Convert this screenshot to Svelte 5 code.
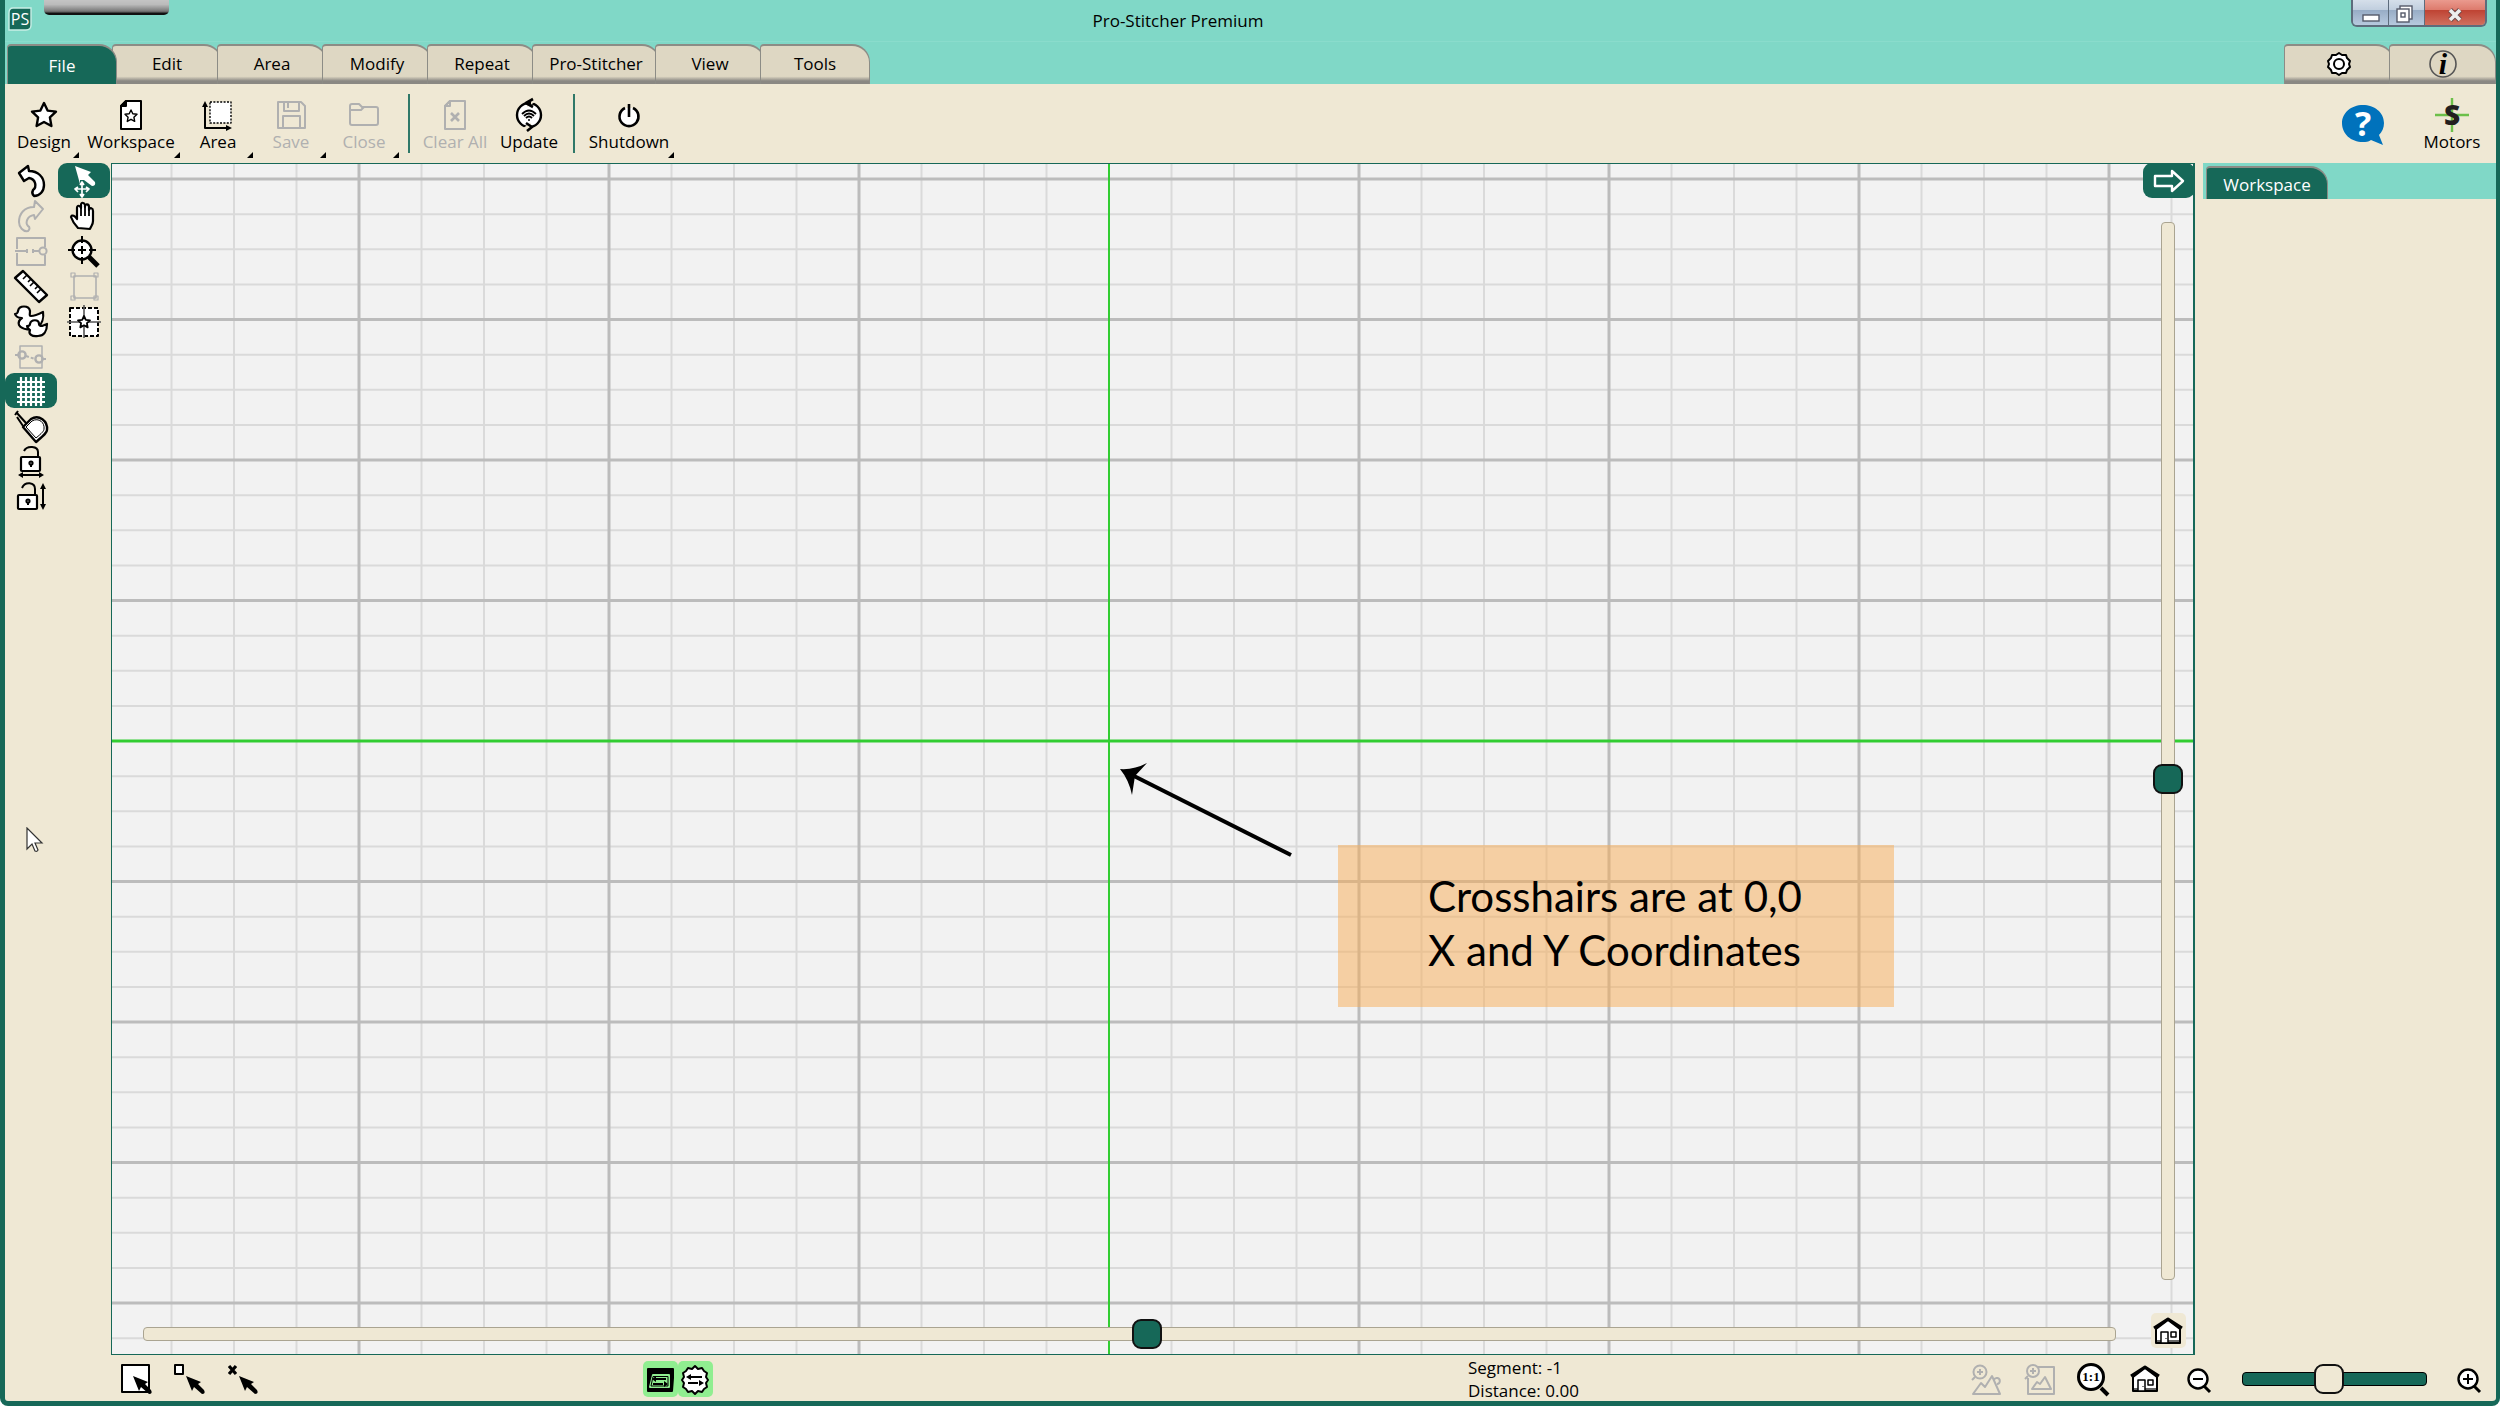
<script>

	let activeTab = "File"
	let tool = "select"
	let grid = true
	let panX = 50.9
	let panY = 52.7
	let zoom = 46.5

	const tabs = ["File", "Edit", "Area", "Modify", "Repeat", "Pro-Stitcher", "View", "Tools"]

	const star = "M17 5 L20.6 12.6 L29 13.6 L22.9 19.4 L24.4 28 L17 24 L9.6 28 L11.1 19.4 L5 13.6 L13.4 12.6 Z"
	const smallStar = "M17 12 L18.8 15.8 L23 16.3 L19.9 19.2 L20.7 23.4 L17 21.3 L13.3 23.4 L14.1 19.2 L11 16.3 L15.2 15.8 Z"
	const house = `<path d="M5 15V29H29V15L17 6Z" fill="#fff"/><path d="M3 14 17 5 31 14" fill="none" stroke-width="3"/><path d="M6 27h22" stroke="#666"/><rect x="10" y="18" width="7" height="11" stroke-width="1.5"/><path d="M15 24v1" stroke-width="1"/><rect x="20" y="18" width="5" height="5" stroke-width="1.5"/>`
	const pointer = `<path d="M14 14 29 20 26 22 32 28 Q34 32 30 32 L22 25 20 29Z" fill="#000" stroke="none"/>`

	// all icons are drawn on a 34 x 34 board
	const icons = {
		design: `<path d="${star}" stroke-width="2.4"/>`,
		workspace: `<path d="M12 3H27V31H7V8Z"/><path d="M7 8 12 3V8Z" fill="#000"/><path d="${smallStar}" stroke-width="1.4"/>`,
		area: `<rect x="9" y="4" width="21" height="21" stroke-width="1.4" stroke-dasharray="2 1.4"/><path d="M4 8V30H27" fill="none"/><path d="M4 3 7 9H1ZM31 30 25 27V33Z" fill="#000" stroke="none"/>`,
		save: `<path d="M4 4H27L31 8V30H4Z"/><path d="M10 4V13H25V4M14 5v5M9 30V18H26V30"/>`,
		close: `<path d="M3 8Q3 6 5 6H12L15 9H29Q31 9 31 11V25Q31 27 29 27H5Q3 27 3 25ZM3 12H14L17 9"/>`,
		clear: `<path d="M12 3H27V31H7V8Z"/><path d="M7 8 12 3V8Z"/><path d="M13 15 21 23M21 15 13 23" stroke-width="2.6"/>`,
		update: `<circle cx="17" cy="17" r="12" stroke-width="2.4"/><path d="M15 0 23 4 15 9Z" fill="#efe8d4" stroke="none"/><path d="M19 25 11 30 19 34Z" fill="#efe8d4" stroke="none"/><path d="M21 1 14 5 21 9M14 5H19M14 25 20 29 15 33" fill="none" stroke-width="2.6"/><path d="M10 16Q17 9 24 16M12 18Q17 13 22 18M14 20Q17 17 20 20" fill="none" stroke-width="1.8"/><circle cx="17" cy="22" r="1" fill="#000" stroke="none"/>`,
		shutdown: `<path d="M13 10A9.5 9.5 0 1 0 21 10" stroke-width="2.6"/><path d="M17 6V19" stroke-width="2.6"/>`,
		undo: `<path d="M5 9 14 2 15 7C24 7 30 13 30 21C30 27 26 32 20 32C18 30 18 28 19 26C23 23 22 15 15 14L10 17Z" stroke-width="2.4"/>`,
		redo: `<path d="M29 10 21 2 20 8C10 8 5 15 5 23C5 28 9 33 14 32C16 30 16 28 14 27C11 24 13 17 20 16L21 20Z"/>`,
		split: `<path d="M3 15V4H31V13M31 21V31H3V19M1 17H13M19 17H25"/><path d="M13 15v4M19 15v4"/><circle cx="29" cy="17" r="3.6"/>`,
		ruler: `<path d="M9 2 33 26 25 33 1 9Z" stroke-width="2.4"/><path d="M13 6 9 10M17 10 14 13M20 13 16 17M24 17 21 20M27 20 23 24" stroke-width="1.6"/>`,
		ducks: `<path d="M1 10C3 10 4 8 4 7C5 1 15 1 16 7C16 10 15 12 17 12C21 12 25 10 29 8C30 14 28 20 24 23C18 27 8 26 5 21C4 18 5 16 8 14C5 14 2 13 1 10Z" stroke-width="2.2"/><path d="M13 22C15 22 16 21 16 20C17 15 25 15 25 20C25 22 26 22 28 22L33 20C33 27 30 32 24 32C18 33 14 30 16 26C15 25 13 24 13 22Z" stroke-width="2.2"/>`,
		nodes: `<rect x="6" y="7" width="22" height="22" stroke-width="1.5"/><path d="M1 16H4M12 17 21 20M29 20H32" stroke-dasharray="3 2"/><circle cx="8" cy="16" r="3.6" stroke-width="2.4"/><circle cx="25" cy="20" r="3.6" stroke-width="2.4"/>`,
		grid: `<path d="M7 3V32M12 3V32M17 3V32M22 3V32M27 3V32M3 8H31M3 13H31M3 18H31M3 23H31M3 28H31" stroke="#fff" stroke-width="2.2"/>`,
		tape: `<path d="M9 18 17 10C25 5 34 12 33 21C33 24 29 27 22 33Z" stroke-width="2.4"/><path d="M12 18 18 12C25 8 31 14 30 20C30 22 28 24 22 29Z" stroke-width="1"/><path d="M1 6 4 2M2 3 12 14M3 8 9 17" stroke-width="2" fill="none"/>`,
		lockX: `<path d="M10 7C13 1 24 2 24 8V13" fill="none"/><rect x="7" y="13" width="19" height="14" rx="1" stroke-width="2.2"/><circle cx="17" cy="19" r="1.6"/><path d="M17 20v3M7 31H27"/><path d="M4 31 9 28V34ZM30 31 25 28V34Z" fill="#000" stroke="none"/>`,
		lockY: `<path d="M8 9C11 2 21 3 21 10V16" fill="none"/><rect x="4" y="16" width="19" height="14" rx="1" stroke-width="2.2"/><circle cx="14" cy="22" r="1.6"/><path d="M14 23v3M29 7V28"/><path d="M29 4 26 10H32ZM29 31 26 25H32Z" fill="#000" stroke="none"/>`,
		select: `<path d="M8 2 24 8 21 11 28 18Q29 22 25 22L17 16 13 20Z" fill="#fff" stroke="none"/><path d="M15 16V34M6 25H24" stroke="#166858" stroke-width="4"/><path d="M15 19V32M9 25H21M13 21 15 18 17 21M13 30 15 33 17 30M11 23 8 25 11 28M19 23 22 25 19 28" fill="none" stroke="#fff" stroke-width="1.7"/>`,
		hand: `<path d="M11 29C7 25 5 21 4 18C5 15 8 17 10 20V9C10 6 13 6 14 9V6C14 3 17 3 18 6V8C18 4 22 5 22 8V11C23 8 26 9 26 12V22C26 26 24 27 23 30Z" stroke-width="2.2"/><path d="M14 8V17M18 7V17M22 10V17" stroke-width="1.8"/>`,
		zoom: `<path d="M22 23 31 32" stroke-width="5"/><circle cx="15" cy="16" r="9.5" stroke-width="2.4"/><path d="M15 2V9M15 23V30M1 16H8M22 16H29M15 12V20M11 16H19" stroke-width="2"/>`,
		frame: `<path d="M7 7H29V29H7Z" stroke-width="1.6"/><g stroke-width="1.2"><rect x="4" y="4" width="4" height="4"/><rect x="27" y="4" width="4" height="4"/><rect x="4" y="27" width="4" height="4"/><rect x="27" y="27" width="4" height="4"/></g>`,
		center: `<rect x="3" y="4" width="28" height="28" stroke-dasharray="4 2"/><path d="M17 1V34M0 18H34" stroke="#555" stroke-width="1.6"/><path d="${smallStar}" stroke-width="1.8"/>`,
		boxSelect: `<rect x="3" y="3" width="27" height="27"/>` + pointer,
		nodeSelect: `<rect x="3" y="3" width="8" height="9"/>` + pointer,
		clearSelect: `<path d="M4 4 11 12M11 4 4 12" stroke-width="3.2"/>` + pointer,
		stitchArea: `<path d="M5 7H30V16L29 29H5Z" fill="#000"/><path d="M10 13H26V25H7Z" fill="#90ee90" stroke="#90ee90" stroke-width="2"/><path d="M10 14.500H25V24H8Z" fill="#90ee90" stroke="#000" stroke-width="1"/><path d="M13 17H23M10 22H20" stroke-width="1.8"/><path d="M9 17 13 14V20ZM25 22 21 19V25Z" fill="#000" stroke="none"/>`,
		stitchGear: `<path d="M17 4 20 7 24 6 26 9 29 11 28 15 30 18 28 21 29 25 26 27 24 30 20 29 17 32 14 29 10 30 8 27 5 25 6 21 4 18 6 15 5 11 8 9 10 6 14 7Z"/><path d="M13 15H24M10 21H20" stroke-width="1.8"/><path d="M8 15 13 12V18ZM26 21 21 18V24Z" fill="#000" stroke="none"/>`,
		home: house,
		mountain: `<circle cx="11" cy="10" r="6.5"/><path d="M11 7v6M8 10h6M6 15 3 18M4 32 12 21 16 25 23 14 31 32ZM25 18A3 3 0 1 1 28 22"/>`,
		picture: `<path d="M16 5H32V32H6V16"/><circle cx="11" cy="9" r="6"/><path d="M11 6v6M8 9h6M6 14 3 17M10 27 15 20 18 22 23 15 29 27Z"/>`,
		actual: `<path d="M26 26 33 33" stroke-width="4"/><circle cx="16" cy="15" r="12.5" stroke-width="3"/><text x="16" y="19" text-anchor="middle" font-family="Liberation Serif, serif" font-weight="bold" font-size="13" fill="#000" stroke="none">1:1</text>`,
		minus: `<path d="M23 24 29 30" stroke-width="3"/><circle cx="17" cy="17" r="9.5" stroke-width="2.4"/><path d="M12 17H22"/>`,
		plus: `<path d="M23 24 29 30" stroke-width="3"/><circle cx="17" cy="17" r="9.5" stroke-width="2.4"/><path d="M12 17H22M17 12V22"/>`,
		gear: `<path d="M17 6 20 8 24 8 25 11 28 14 27 17 28 20 25 23 24 26 20 26 17 28 14 26 10 26 9 23 6 20 7 17 6 14 9 11 10 8 14 8Z"/><circle cx="17" cy="17" r="5"/>`,
		info: `<circle cx="17" cy="17" r="13" fill="none" stroke="#555" stroke-width="1.6"/><text x="17" y="27" text-anchor="middle" font-family="Liberation Serif, serif" font-weight="bold" font-style="italic" font-size="30" fill="#000" stroke="none">i</text>`,
		motors: `<path d="M17 0V34M0 17H34" stroke="#6cc04a" stroke-width="2.4"/><text x="17" y="27" text-anchor="middle" font-family="Open Sans, sans-serif" font-weight="800" font-size="28" fill="#231f20" stroke="none">S</text>`
	}

	const fileTools = [
		{ name: "Design", icon: "design", menu: true },
		{ name: "Workspace", icon: "workspace", menu: true, size: "wide" },
		{ name: "Area", icon: "area", menu: true },
		{ name: "Save", icon: "save", menu: true, off: true },
		{ name: "Close", icon: "close", menu: true, off: true },
		{ line: true },
		{ name: "Clear All", icon: "clear", off: true, size: "mid" },
		{ name: "Update", icon: "update" },
		{ line: true },
		{ name: "Shutdown", icon: "shutdown", menu: true, size: "big" }
	]

	const leftTools = [
		{ name: "Undo", icon: "undo" },
		{ name: "Redo", icon: "redo", off: true },
		{ name: "Split", icon: "split", off: true },
		{ name: "Ruler", icon: "ruler" },
		{ name: "Ducks", icon: "ducks" },
		{ name: "Nodes", icon: "nodes", off: true },
		{ name: "Grid", icon: "grid" },
		{ name: "Tape", icon: "tape" },
		{ name: "Lock horizontal", icon: "lockX" },
		{ name: "Lock vertical", icon: "lockY" }
	]

	const rightTools = [
		{ name: "Select", icon: "select" },
		{ name: "Pan", icon: "hand" },
		{ name: "Zoom", icon: "zoom" },
		{ name: "Frame", icon: "frame", off: true },
		{ name: "Center", icon: "center" }
	]

	// the crosshair is 0,0 and every fourth line is a heavy one
	const originX = 997
	const originY = 577
	const cellX = 250 / 4
	const cellY = 562 / 16
	const steps = Array.from({ length: 81 }, (_, i) => i - 40)
	const minor = steps.filter(n => n % 4 !== 0)
	const major = steps.filter(n => n % 4 === 0 && n !== 0)

	const toggleGrid = (name) => {
		if (name === "Grid") grid = !grid
	}

</script>

{#snippet icon(name)}
	<svg class="icon" viewBox="0 0 34 34" aria-hidden="true">{@html icons[name]}</svg>
{/snippet}

<div class="window">
	<header class="titlebar">
		<svg class="logo" viewBox="0 0 24 24" aria-hidden="true">
			<path d="M5 1H23V18Q23 23 18 23H1V6Q1 1 5 1Z" fill="#166858" stroke="#c9eee6" stroke-width="1.4" />
			<text x="12" y="18" text-anchor="middle" font-size="16" fill="#fff">PS</text>
		</svg>
		<div class="handle"></div>
		<h1>Pro-Stitcher Premium</h1>
		<div class="controls">
			<button aria-label="Minimize">
				<svg viewBox="0 0 36 26"><rect x="10" y="15" width="16" height="6" fill="#fff" stroke="#555a6a" stroke-width="1.4" /></svg>
			</button>
			<button aria-label="Restore">
				<svg viewBox="0 0 36 26"><g fill="#fff" stroke="#555a6a" stroke-width="1.4"><rect x="11" y="6" width="12" height="13" /><rect x="8" y="9" width="12" height="13" /><rect x="12" y="13" width="4" height="4" /></g></svg>
			</button>
			<button class="shut" aria-label="Close window">
				<svg viewBox="0 0 36 26"><path d="M13 10 23 20M23 10 13 20" stroke="#6b4a4a" stroke-width="5.5" /><path d="M13 10 23 20M23 10 13 20" stroke="#eee" stroke-width="3.6" /></svg>
			</button>
		</div>
	</header>

	<nav class="tabs">
		{#each tabs as tab}
			<button class="tab" class:active={tab === activeTab} class:long={tab === "Pro-Stitcher"} on:click={() => activeTab = tab}>{tab}</button>
		{/each}
		<span class="space"></span>
		<button class="tab" aria-label="Settings">{@render icon("gear")}</button>
		<button class="tab" aria-label="Information">{@render icon("info")}</button>
	</nav>

	<div class="toolbar">
		{#each fileTools as item}
			{#if item.line}
				<span class="line"></span>
			{:else}
				<button class="tool {item.size || ''}" class:menu={item.menu} disabled={item.off}>
					{@render icon(item.icon)}
					{item.name}
				</button>
			{/if}
		{/each}
		<span class="space"></span>
		<button class="help" aria-label="Help">
			<svg viewBox="0 0 44 44">
				<path d="M22 4C33 4 43 11 43 22C43 27 41 31 38 34L42 44 30 39C27 41 25 41 22 41C10 41 1 33 1 22C1 12 10 4 22 4Z" fill="#0072bc" />
				<text x="22" y="35" text-anchor="middle" font-size="34" font-weight="bold" fill="#fff">?</text>
			</svg>
		</button>
		<button class="tool mid">
			{@render icon("motors")}
			Motors
		</button>
	</div>

	<main>
		<aside class="side">
			<div>
				{#each leftTools as item}
					<button class:on={item.name === "Grid" && grid} disabled={item.off} aria-label={item.name} on:click={() => toggleGrid(item.name)}>{@render icon(item.icon)}</button>
				{/each}
			</div>
			<div>
				{#each rightTools as item}
					<button class:on={item.icon === tool} disabled={item.off} aria-label={item.name} on:click={() => tool = item.icon}>{@render icon(item.icon)}</button>
				{/each}
			</div>
			<svg class="mouse" viewBox="0 0 18 26" aria-hidden="true"><path d="M1 1V22L6 17 9 24Q11 25 12 23L9 16H16Z" fill="#fff" stroke="#333" stroke-width="1.2" /></svg>
		</aside>

		<section class="canvas">
			<svg class="board" aria-hidden="true">
				{#if grid}
					<g stroke="#dadada" stroke-width="2">
						{#each minor as n}
							<line x1={originX + n * cellX} x2={originX + n * cellX} y1="0" y2="100%" />
							<line x1="0" x2="100%" y1={originY + n * cellY} y2={originY + n * cellY} />
						{/each}
					</g>
					<g stroke="#bcbcbc" stroke-width="3">
						{#each major as n}
							<line x1={originX + n * cellX} x2={originX + n * cellX} y1="0" y2="100%" />
							<line x1="0" x2="100%" y1={originY + n * cellY} y2={originY + n * cellY} />
						{/each}
					</g>
				{/if}
				<line x1={originX} x2={originX} y1="0" y2="100%" stroke="#32cd32" stroke-width="2" />
				<line x1="0" x2="100%" y1={originY} y2={originY} stroke="#32cd32" stroke-width="3" />
				<path d="M1022 612 1179 691" stroke="#000" stroke-width="4" />
				<path d="M1008 605Q1022 606 1035 599L1023 612 1020 631Q1017 616 1008 605Z" />
			</svg>
			<p class="note">Crosshairs are at 0,0<br>X and Y Coordinates</p>
			<button class="expand" aria-label="Hide panel">
				<svg viewBox="0 0 34 24"><path d="M3 7H20V2L31 12 20 22V17H3Z" fill="none" stroke="#fff" stroke-width="2.4" stroke-linejoin="round" /></svg>
			</button>
			<input class="pan-y" type="range" step="any" aria-label="Pan vertical" bind:value={panY}>
			<input class="pan-x" type="range" step="any" aria-label="Pan horizontal" bind:value={panX}>
			<button class="home" aria-label="Home">{@render icon("home")}</button>
		</section>

		<aside class="panel">
			<div class="panel-head">
				<button class="tab active">Workspace</button>
			</div>
		</aside>
	</main>

	<footer>
		<div class="group">
			<button aria-label="Box select">{@render icon("boxSelect")}</button>
			<button aria-label="Node select">{@render icon("nodeSelect")}</button>
			<button aria-label="Clear selection">{@render icon("clearSelect")}</button>
		</div>
		<div class="badges">
			<button aria-label="Stitch area">{@render icon("stitchArea")}</button>
			<button aria-label="Stitch settings">{@render icon("stitchGear")}</button>
		</div>
		<div class="status">
			<p>Segment: -1<br>Distance: 0.00</p>
			<div class="group">
				<button disabled aria-label="Zoom to pattern">{@render icon("mountain")}</button>
				<button disabled aria-label="Zoom to picture">{@render icon("picture")}</button>
				<button aria-label="Actual size">{@render icon("actual")}</button>
				<button aria-label="Zoom home">{@render icon("home")}</button>
				<button aria-label="Zoom out">{@render icon("minus")}</button>
				<input class="zoom" type="range" step="any" aria-label="Zoom" bind:value={zoom}>
				<button aria-label="Zoom in">{@render icon("plus")}</button>
			</div>
		</div>
	</footer>
</div>

<style>
	* {
		margin: 0;
		box-sizing: border-box;
	}
	:global(body) {
		margin: 0;
		background-color: #fff;
	}
	button {
		padding: 0;
		border: none;
		background: none;
		font: inherit;
		color: #000;
	}
	button:disabled {
		color: #b0b0b0;
	}
	svg {
		display: block;
	}
	.icon {
		width: 34px;
		height: 34px;
		fill: #fff;
		stroke: currentColor;
		stroke-width: 2;
		stroke-linejoin: round;
		overflow: visible;
		flex: none;
	}
	button:disabled .icon {
		fill: none;
	}
	.space {
		flex: 1;
	}

	.window {
		display: flex;
		flex-direction: column;
		min-height: 100vh;
		border: solid #166858;
		border-width: 0 4px 5px 5px;
		border-radius: 0 0 8px 8px;
		background-color: #efe8d4;
		font-family: "Open Sans", "Noto Sans", sans-serif;
		font-size: 17px;
		line-height: 24px;
		overflow: hidden;
	}

	.titlebar {
		display: flex;
		height: 42px;
		padding: 0 9px 0 3px;
		background-color: #80d8c7;
		border-bottom: 1px solid #8adccc;
	}
	.logo {
		width: 24px;
		height: 24px;
		margin-top: 7px;
	}
	.handle {
		width: 125px;
		height: 15px;
		margin-left: 12px;
		border-radius: 0 0 5px 5px;
		background: linear-gradient(#c4c4c4, #bbb 30%, #777 75%, #111 90%);
	}
	h1 {
		flex: 1;
		padding: 9px 164px 0 0;
		font-size: 17px;
		font-weight: 400;
		text-align: center;
	}
	.controls {
		display: flex;
		height: 27px;
		border: 2px solid #5d6c7c;
		border-top: none;
		border-radius: 0 0 6px 6px;
		overflow: hidden;
	}
	.controls button {
		width: 36px;
		background: linear-gradient(#d5dfea, #c0cede 40%, #98adc6 42%, #b7c9de);
		border-right: 1px solid #5d6c7c;
	}
	.controls svg {
		height: 26px;
		margin: 0 auto;
	}
	.controls .shut {
		width: 60px;
		border: none;
		background: linear-gradient(#ea9a8e, #dd7a6c 40%, #bf4434 42%, #d0705f);
	}

	.tabs {
		display: flex;
		height: 42px;
		padding: 2px 0 0 2px;
		background-color: #80d8c7;
	}
	.tab {
		position: relative;
		display: flex;
		justify-content: center;
		width: 110px;
		height: 40px;
		margin-right: -5px;
		padding-top: 6px;
		border: 2px solid #8c8c86;
		border-width: 2px 1px 0 1px;
		border-radius: 4px 18px 0 0;
		background: linear-gradient(#ded7c3 80%, #8a8883 92%);
	}
	.tabs .tab:last-child {
		margin-right: 0;
		width: 107px;
	}
	.tab .icon {
		margin-top: -5px;
	}
	.tab.long {
		width: 128px;
	}
	.tab.active {
		z-index: 1;
		padding-top: 8px;
		background: #166858;
		color: #fff;
	}

	.toolbar {
		display: flex;
		gap: 3px;
		height: 79px;
		padding: 14px 8px 5px 4px;
	}
	.tool {
		position: relative;
		display: flex;
		flex-direction: column;
		align-items: center;
		width: 70px;
		line-height: 20px;
		white-space: nowrap;
	}
	.tool.mid {
		width: 72px;
	}
	.tool.big {
		width: 90px;
	}
	.tool.wide {
		width: 98px;
	}
	.tool.menu::after {
		content: "";
		position: absolute;
		right: 0;
		bottom: 0;
		border: 3px solid #000;
		border-top-color: transparent;
		border-left-color: transparent;
	}
	.line {
		width: 2px;
		height: 59px;
		margin: -4px 6px 0;
		background-color: #2f7868;
	}
	.help {
		width: 44px;
		height: 44px;
		margin: 3px 28px 0 0;
	}

	main {
		flex: 1;
		display: grid;
		grid-template-columns: 106px 1fr 301px;
	}
	.side {
		position: relative;
		display: grid;
		grid-template-columns: 1fr 1fr;
	}
	.side button {
		display: grid;
		place-items: center;
		width: 52px;
		height: 35px;
		border-radius: 9px;
	}
	.side button.on {
		background-color: #166858;
	}
	.mouse {
		position: absolute;
		left: 21px;
		top: 664px;
		width: 18px;
		height: 26px;
	}

	.canvas {
		position: relative;
		border: 1px solid #166858;
		border-right-width: 2px;
		background-color: #f2f2f2;
		overflow: hidden;
	}
	.board {
		position: absolute;
		width: 100%;
		height: 100%;
	}
	.note {
		position: absolute;
		left: 1226px;
		top: 681px;
		width: 556px;
		height: 162px;
		padding: 24px 90px;
		background-color: rgba(248, 171, 83, 0.5);
		font-family: Lato, sans-serif;
		font-size: 42px;
		line-height: 54px;
		white-space: nowrap;
	}
	.expand {
		position: absolute;
		right: -2px;
		top: -1px;
		width: 52px;
		height: 35px;
		border-radius: 9px;
		background-color: #166858;
	}
	.expand svg {
		width: 34px;
		height: 24px;
		margin: 0 auto;
	}
	.home {
		position: absolute;
		right: 7px;
		bottom: 6px;
		width: 35px;
		height: 35px;
		border-radius: 5px;
		background-color: #efe8d4;
	}

	input {
		appearance: none;
		margin: 0;
		background: none;
	}
	input::-webkit-slider-runnable-track {
		height: 14px;
		border: 1px solid #aaa491;
		border-radius: 4px;
		background-color: #efe8d4;
	}
	input::-webkit-slider-thumb {
		appearance: none;
		width: 30px;
		height: 30px;
		margin-top: -9px;
		border: 2px solid #111;
		border-radius: 9px;
		background-color: #166858;
	}
	.pan-x {
		position: absolute;
		left: 31px;
		bottom: 5px;
		width: calc(100% - 108px);
		height: 30px;
	}
	.pan-y {
		position: absolute;
		top: 58px;
		right: 10px;
		width: 30px;
		height: calc(100% - 132px);
		writing-mode: vertical-lr;
	}
	.pan-y::-webkit-slider-runnable-track {
		width: 14px;
		height: 100%;
	}
	.pan-y::-webkit-slider-thumb {
		margin: 0 0 0 -9px;
	}
	.zoom {
		width: 185px;
		height: 30px;
		margin: 0 5px 0 8px;
	}
	.zoom::-webkit-slider-runnable-track {
		border-color: #000;
		background-color: #166858;
	}
	.zoom::-webkit-slider-thumb {
		background-color: #efe8d4;
	}

	.panel {
		padding-left: 8px;
	}
	.panel-head {
		height: 36px;
		padding: 3px 0 0 3px;
		background-color: #80d8c7;
	}
	.panel .tab {
		width: 122px;
		height: 33px;
		padding-top: 5px;
	}

	footer {
		display: grid;
		grid-template-columns: 638fr 825fr 1028fr;
		height: 46px;
		padding-bottom: 2px;
	}
	.group {
		display: flex;
		align-items: center;
		gap: 19px;
	}
	footer > .group {
		padding-left: 114px;
	}
	.badges {
		display: flex;
		align-items: center;
	}
	.badges button {
		width: 35px;
		height: 36px;
		border-radius: 5px;
		background-color: #90ee90;
	}
	.status {
		display: flex;
		justify-content: space-between;
		padding-right: 11px;
	}
	.status p {
		padding-top: 1px;
		line-height: 23px;
	}
</style>
